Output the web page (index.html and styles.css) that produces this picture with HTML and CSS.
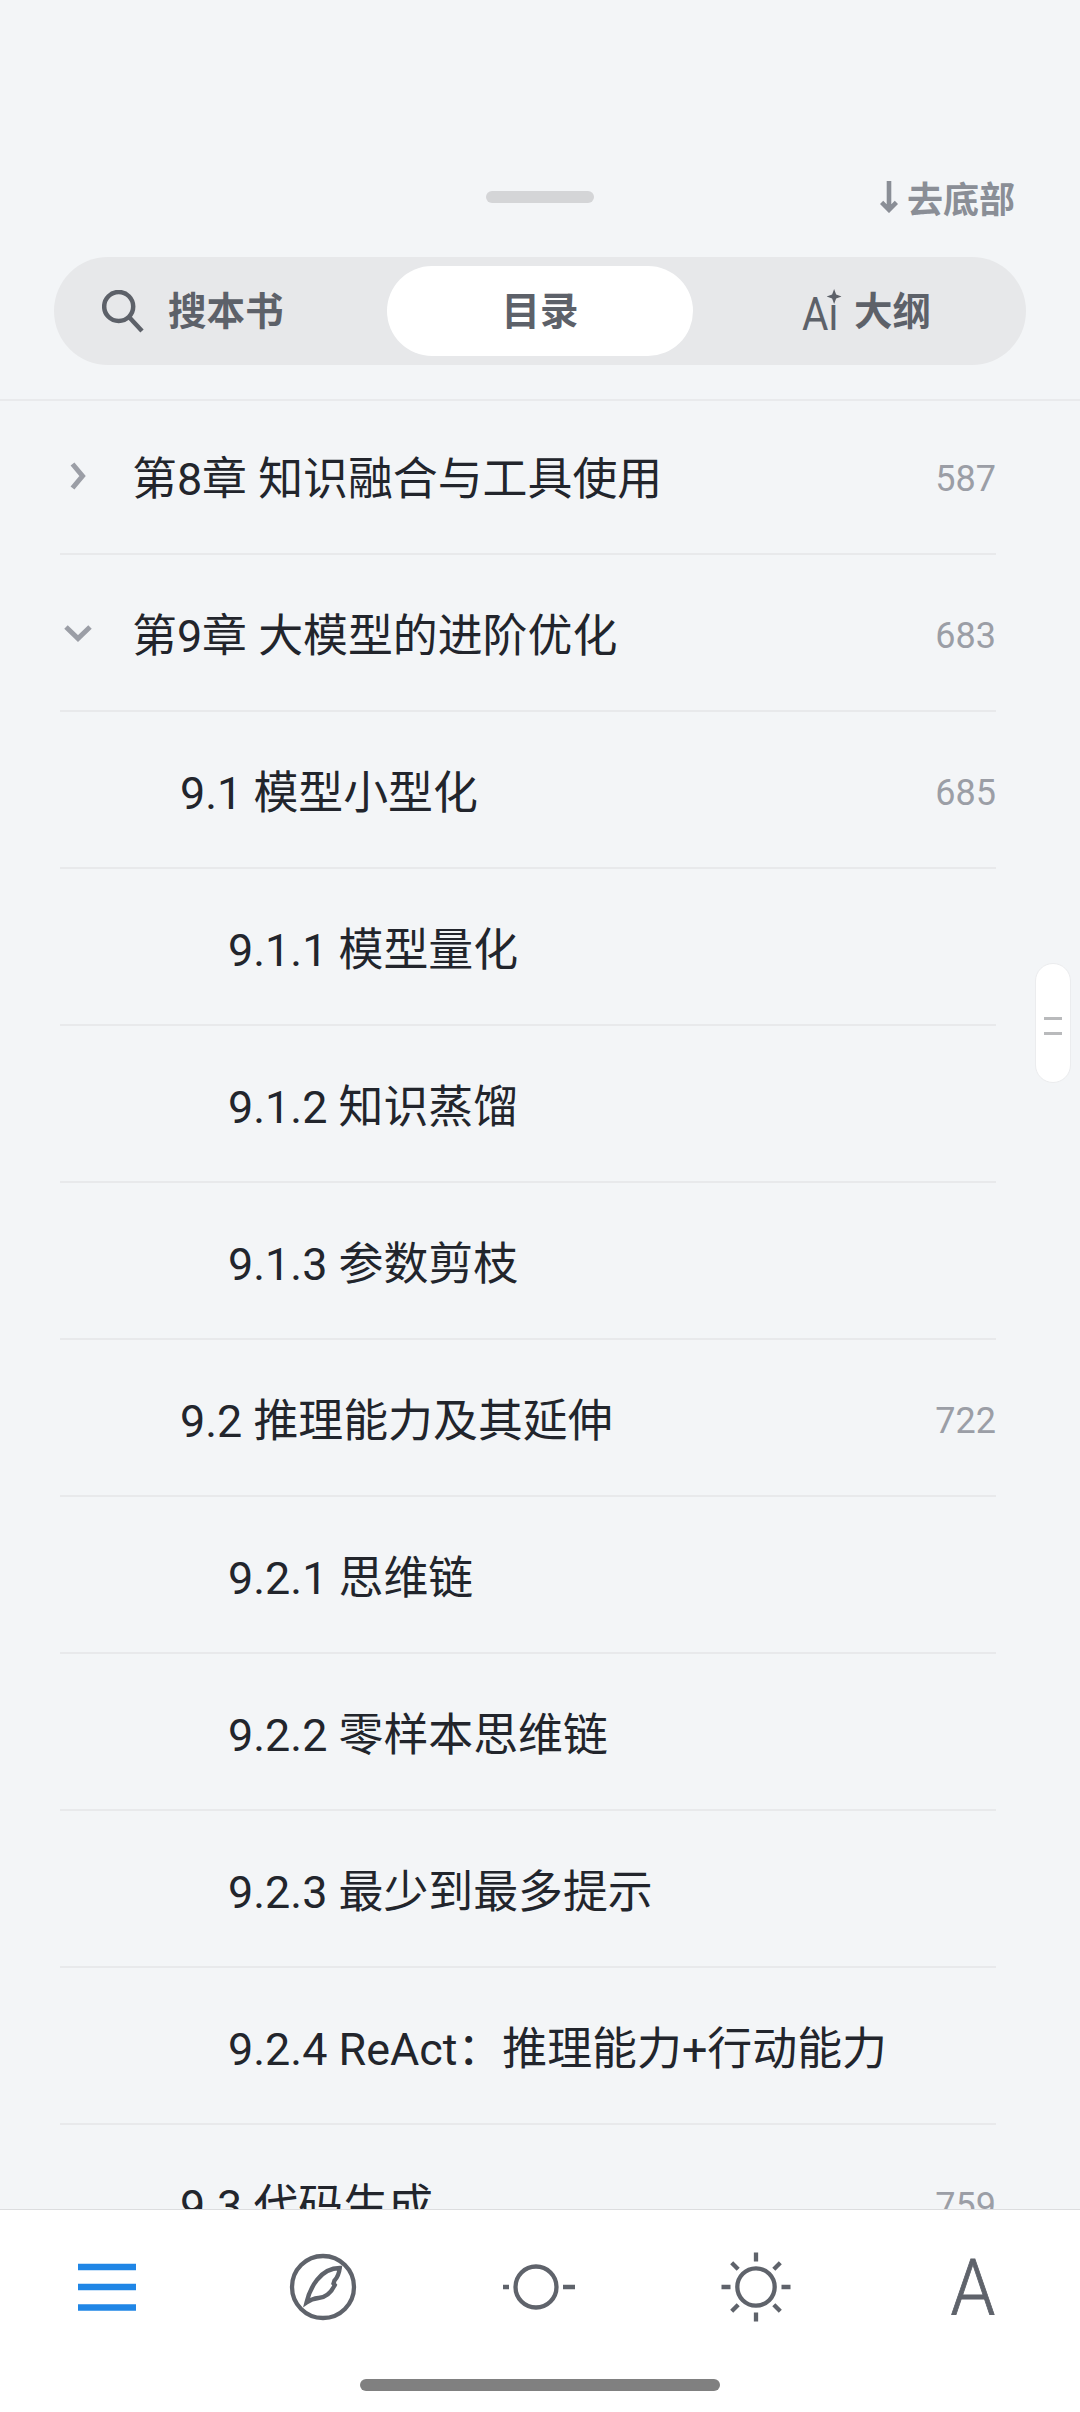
FILE: index.html
```html
<!DOCTYPE html>
<html lang="zh-CN">
<head>
<meta charset="utf-8">
<title>目录</title>
<link rel="stylesheet" href="styles.css">
</head>
<body>
<div class="screen">
  <header class="header">
    <div class="top">
      <span class="handle"></span>
      <a class="to-bottom"><svg width="18" height="32" viewBox="0 0 18 32"><path d="M9 0V28M1.600 21.300 9 28.800l7.400-7.500" fill="none" stroke="currentColor" stroke-width="4.600"/></svg>去底部</a>
    </div>
    <nav class="tabs">
      <a class="tab tab-search"><svg width="42" height="43" viewBox="0 0 42 43"><circle cx="16.700" cy="16.500" r="14.500"/><path d="M27 27 40 41"/></svg><span class="label">搜本书</span></a>
      <a class="tab tab-active"><span class="label">目录</span></a>
      <a class="tab tab-outline"><span class="ai">Aı<svg class="spark" width="17" height="15" viewBox="0 0 17 15"><path d="M8.500 0L10.800 5.600 17 7.500L10.800 9.400 8.500 15L6.200 9.400 0 7.500L6.200 5.600Z"/></svg></span><span class="label">大纲</span></a>
    </nav>
  </header>
  <main class="list">
    <div class="row"><svg class="chev" width="28" height="28" viewBox="0 0 28 28"><path d="m8.500 2 10 12-10 12"/></svg><span class="name">第8章 知识融合与工具使用</span><span class="page">587</span></div>
    <div class="row"><svg class="chev" width="28" height="28" viewBox="0 0 28 28"><path d="m2 8 12 11.500L26 8"/></svg><span class="name">第9章 大模型的进阶优化</span><span class="page">683</span></div>
    <div class="row l2"><span class="name">9.1 模型小型化</span><span class="page">685</span></div>
    <div class="row l3"><span class="name">9.1.1 模型量化</span></div>
    <div class="row l3"><span class="name">9.1.2 知识蒸馏</span></div>
    <div class="row l3"><span class="name">9.1.3 参数剪枝</span></div>
    <div class="row l2"><span class="name">9.2 推理能力及其延伸</span><span class="page">722</span></div>
    <div class="row l3"><span class="name">9.2.1 思维链</span></div>
    <div class="row l3"><span class="name">9.2.2 零样本思维链</span></div>
    <div class="row l3"><span class="name">9.2.3 最少到最多提示</span></div>
    <div class="row l3"><span class="name">9.2.4 ReAct：推理能力+行动能力</span></div>
    <div class="row l2"><span class="name">9.3 代码生成</span><span class="page">759</span></div>
  </main>
  <footer class="footer">
    <div class="tools">
      <svg class="menu" width="80" height="80" viewBox="0 0 80 80"><path d="M11 20H69M11 40H69M11 60.500H69"/></svg>
      <svg width="80" height="80" viewBox="0 0 80 80"><circle cx="40" cy="40" r="31"/><path d="M23.500 55.500C27 41 37 21 56.800 21C56 27 54 31 51.500 33.500L50.500 36.500L51.800 38C48 46 42 50.500 35.500 51C31 51.500 27 53 23.500 55.500Z"/></svg>
      <svg width="80" height="80" viewBox="0 0 80 80"><circle cx="40" cy="40" r="20.500"/><path d="M7 40h6M67 40h12"/></svg>
      <svg width="80" height="80" viewBox="0 0 80 80"><circle cx="40" cy="40" r="18.700"/><path d="M40 5.500v9M40 65.500v9M5.500 40h9M65.500 40h9M15.700 15.700l6.500 6.500M57.800 57.800l6.500 6.500M15.700 64.300l6.500-6.500M57.800 22.200l6.500-6.500"/></svg>
      <span class="font-a">A</span>
    </div>
    <div class="home"></div>
  </footer>
  <div class="scroller"><i></i><i></i></div>
</div>
</body>
</html>
```
FILE: styles.css
```css
* { box-sizing: border-box; }
body { margin: 0; background: #f3f5f7; font-family: Roboto, "Noto Sans CJK SC", sans-serif; }
.screen { position: relative; width: 1080px; height: 2412px; display: flex; flex-direction: column; overflow: hidden; }
.header { height: 401px; flex: none; border-bottom: 2px solid #e9eaec; }
.top { height: 257px; padding: 172px 65px 0 486px; display: flex; justify-content: space-between; align-items: flex-start; }
.handle { width: 108px; height: 12px; margin-top: 19px; border-radius: 6px; background: #d4d5d7; }
.to-bottom { display: flex; align-items: center; gap: 9px; height: 50px; font-size: 36px; font-weight: 700; color: #8a8e96; }
.tabs { margin: 0 54px; height: 108px; padding: 9px; border-radius: 54px; background: #e7e8ea; display: grid; grid-template-columns: 324px 306px 324px; color: #5d6169; font-size: 38.500px; font-weight: 700; }
.tab { display: flex; align-items: center; height: 90px; }
.tab svg { fill: none; stroke: currentColor; stroke-width: 4.500; }
.tab-search { padding-left: 39px; gap: 24px; }
.tab-active { justify-content: center; background: #fff; border-radius: 45px; }
.tab-outline { padding-left: 109px; }
.label { padding-bottom: 7px; }
.ai { position: relative; width: 52px; padding-top: 6px; font-size: 46px; font-weight: 400; line-height: 84px; transform: scaleX(.88); transform-origin: left; }
.tab .spark { position: absolute; left: 28px; top: 23px; fill: currentColor; stroke: none; }
.list { flex: 1; min-height: 0; overflow: hidden; padding: 0 84px 0 60px; }
.row { height: 157px; border-bottom: 2px solid #e8e9eb; display: flex; align-items: center; padding-left: 72px; color: #22252c; font-size: 44.900px; }
.row:first-child { margin-top: -3px; }
.l2 { padding-left: 120px; }
.l3 { padding-left: 168px; }
.chev { margin: 0 40px 0 -68px; fill: none; stroke: #9b9ea6; stroke-width: 5; }
.name { flex: 1; white-space: nowrap; padding-bottom: 1px; }
.page { padding-top: 7px; font-size: 36px; color: #9b9ea6; }
.footer { height: 203px; flex: none; background: #fff; border-top: 1px solid #dcdddf; }
.tools { display: grid; grid-template-columns: 216px 213px 220px 217px 80px; padding: 37px 0 0 67px; height: 169px; }
.tools svg { fill: none; stroke: #5f636b; stroke-width: 4.300; }
.tools .menu { stroke: #2086e6; stroke-width: 6.500; }
.font-a { width: 80px; text-align: center; font-size: 77px; font-weight: 300; -webkit-text-stroke: .8px #5f636b; line-height: 85px; color: #5f636b; transform: scaleX(.93); }
.home { width: 360px; height: 12px; margin: 0 auto; border-radius: 6px; background: #808080; }
.scroller { position: absolute; left: 1035px; top: 963px; width: 36px; height: 120px; border: 1px solid #ebecee; border-radius: 18px; background: #fff; display: flex; flex-direction: column; align-items: center; justify-content: center; gap: 12px; padding-top: 6px; }
.scroller i { width: 18px; height: 3px; background: #b9babc; }
```
